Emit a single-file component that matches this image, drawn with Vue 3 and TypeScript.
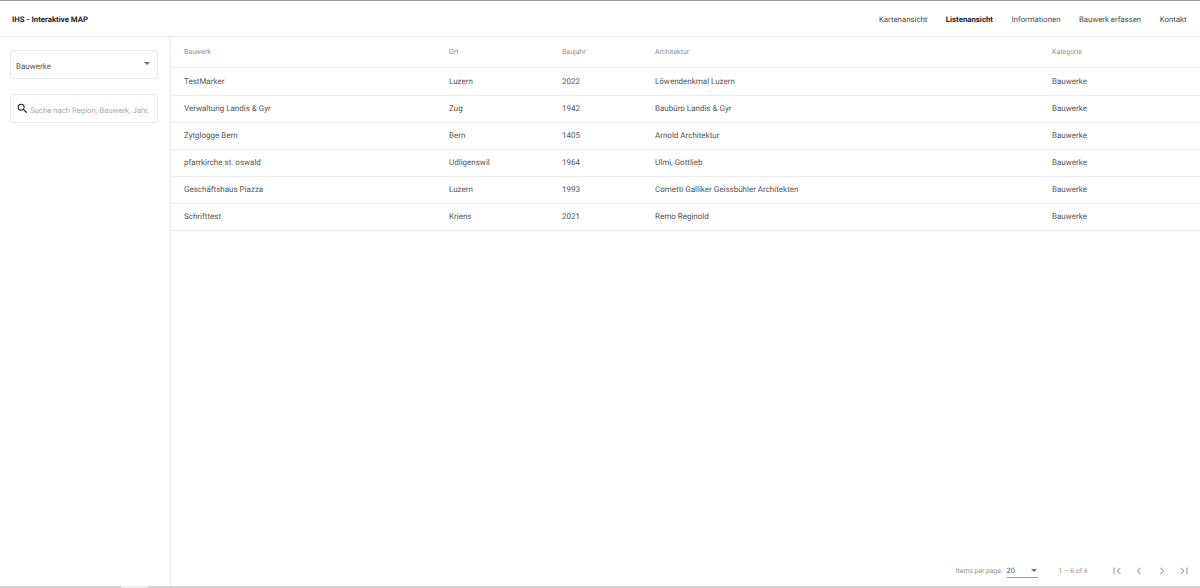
<script setup lang="ts">
interface Row { name: string; ort: string; jahr: number; arch: string; kat: string }
const nav = ['Kartenansicht', 'Listenansicht', 'Informationen', 'Bauwerk erfassen', 'Kontakt']
const heads = ['Bauwerk', 'Ort', 'Baujahr', 'Architektur', 'Kategorie']
const rows: Row[] = [
  { name: 'TestMarker', ort: 'Luzern', jahr: 2022, arch: 'Löwendenkmal Luzern', kat: 'Bauwerke' },
  { name: 'Verwaltung Landis & Gyr', ort: 'Zug', jahr: 1942, arch: 'Baubüro Landis & Gyr', kat: 'Bauwerke' },
  { name: 'Zytglogge Bern', ort: 'Bern', jahr: 1405, arch: 'Arnold Architektur', kat: 'Bauwerke' },
  { name: 'pfarrkirche st. oswald', ort: 'Udligenswil', jahr: 1964, arch: 'Ulmi, Gottlieb', kat: 'Bauwerke' },
  { name: 'Geschäftshaus Piazza', ort: 'Luzern', jahr: 1993, arch: 'Cometti Galliker Geissbühler Architekten', kat: 'Bauwerke' },
  { name: 'Schrifttest', ort: 'Kriens', jahr: 2021, arch: 'Remo Reginold', kat: 'Bauwerke' },
]
</script>

<template>
  <div class="page">
    <header class="topbar">
      <span class="brand">IHS - Interaktive MAP</span>
      <nav class="nav">
        <a v-for="n in nav" :key="n" :class="{ active: n === 'Listenansicht' }">{{ n }}</a>
      </nav>
    </header>
    <div class="body">
      <aside class="side">
        <div class="field select">
          <span>Bauwerke</span>
          <i class="caret"></i>
        </div>
        <div class="field search">
          <svg width="13" height="13" viewBox="0 0 24 24" fill="#222">
            <path d="M15.5 14h-.79l-.28-.27A6.47 6.47 0 0 0 16 9.5 6.5 6.5 0 1 0 9.5 16c1.61 0 3.09-.59 4.23-1.57l.27.28v.79l5 4.99L20.49 19l-4.99-5zm-6 0C7.01 14 5 11.99 5 9.5S7.01 5 9.5 5 14 7.01 14 9.5 11.99 14 9.5 14z"/>
          </svg>
          <span class="placeholder">Suche nach Region, Bauwerk, Jahr,</span>
        </div>
      </aside>
      <main class="content">
        <div class="table">
          <div class="row head">
            <span v-for="h in heads" :key="h">{{ h }}</span>
          </div>
          <div v-for="r in rows" :key="r.name" class="row">
            <span>{{ r.name }}</span>
            <span>{{ r.ort }}</span>
            <span>{{ r.jahr }}</span>
            <span>{{ r.arch }}</span>
            <span>{{ r.kat }}</span>
          </div>
        </div>
        <footer class="pager">
          <span class="label">Items per page:</span>
          <div class="size"><span>20</span><i class="caret"></i></div>
          <span class="range">1 – 6 of 6</span>
          <div class="btns">
            <svg width="14" height="14" viewBox="0 0 24 24" fill="#a8a8a8"><path d="M18.41 16.59 13.82 12l4.59-4.59L17 6l-6 6 6 6zM6 6h2v12H6z"/></svg>
            <svg width="14" height="14" viewBox="0 0 24 24" fill="#a8a8a8"><path d="M15.41 7.41 14 6l-6 6 6 6 1.41-1.41L10.83 12z"/></svg>
            <svg width="14" height="14" viewBox="0 0 24 24" fill="#a8a8a8"><path d="M10 6 8.59 7.41 13.17 12l-4.58 4.59L10 18l6-6z"/></svg>
            <svg width="14" height="14" viewBox="0 0 24 24" fill="#a8a8a8"><path d="M5.59 7.41 10.18 12l-4.59 4.59L7 18l6-6-6-6zM16 6h2v12h-2z"/></svg>
          </div>
        </footer>
      </main>
    </div>
    <div class="scrollbar"><div class="gap"></div></div>
  </div>
</template>

<style>
body { margin: 0; background: #fff; }
</style>

<style scoped>
.page {
  width: 1200px;
  height: 588px;
  display: flex;
  flex-direction: column;
  overflow: hidden;
  font-family: Roboto, "Liberation Sans", sans-serif;
  font-size: 8px;
  text-rendering: geometricPrecision;
  color: #555;
  background: #fff;
  border-top: 1px solid #999;
  box-sizing: border-box;
}
.topbar {
  height: 36px;
  flex: none;
  box-sizing: border-box;
  display: flex;
  align-items: center;
  justify-content: space-between;
  padding: 2px 13.5px 0 12px;
  border-bottom: 1px solid #ececec;
}
.brand { font-weight: 700; color: #222; font-size: 7.8px; }
.nav { display: flex; gap: 18.5px; font-size: 7.8px; }
.nav a { color: #4a4a4a; }
.nav a.active { font-weight: 700; color: #1c1c1c; }
.body { flex: 1; display: flex; min-height: 0; }
.side {
  width: 171px;
  flex: none;
  box-sizing: border-box;
  border-right: 1px solid #ececec;
  padding: 13px 12px 0 10px;
  display: flex;
  flex-direction: column;
  gap: 15px;
}
.field {
  height: 29px;
  box-sizing: border-box;
  border: 1px solid #e8e8e8;
  border-radius: 3px;
  display: flex;
  align-items: center;
}
.select { justify-content: space-between; padding: 0 7px 0 5px; }
.select span { padding-top: 3px; }
.select .caret { margin-top: -3px; }
.search { padding: 0 6px 0 5px; gap: 1px; }
.search svg { flex: none; }
.placeholder { color: #aaa; white-space: nowrap; font-size: 7.75px; padding-top: 3px; }
.caret {
  display: block;
  width: 0;
  height: 0;
  border-left: 3px solid transparent;
  border-right: 3px solid transparent;
  border-top: 3px solid #6e6e6e;
}
.content { flex: 1; display: flex; flex-direction: column; min-width: 0; }
.table { flex: 1; }
.row {
  display: grid;
  grid-template-columns: 265px 113px 93px 397px 1fr;
  height: 27px;
  align-items: center;
  padding: 0 0 1px 13px;
  border-bottom: 1px solid #ececec;
  box-sizing: border-box;
}
.head { height: 31px; font-size: 7px; color: #8f8f8f; padding-bottom: 0; }
.head + .row { height: 28px; padding-bottom: 0; }
.pager {
  height: 31px;
  flex: none;
  display: flex;
  align-items: center;
  justify-content: flex-end;
  font-size: 6.8px;
  color: #8f8f8f;
  padding-right: 9px;
}
.size {
  width: 31px;
  height: 14px;
  margin-left: 4px;
  border-bottom: 1px solid #9a9a9a;
  color: #555;
  display: flex;
  align-items: center;
  justify-content: space-between;
  font-size: 7.4px;
}
.size .caret { margin-right: 1px; }
.range { margin-left: 21px; }
.btns { display: flex; gap: 8.5px; margin-left: 22px; }
.scrollbar {
  height: 2px;
  flex: none;
  background: #d2d2d2;
  position: relative;
}
.gap { position: absolute; left: 121px; width: 27px; top: 0; bottom: 0; background: #efefef; }
</style>
